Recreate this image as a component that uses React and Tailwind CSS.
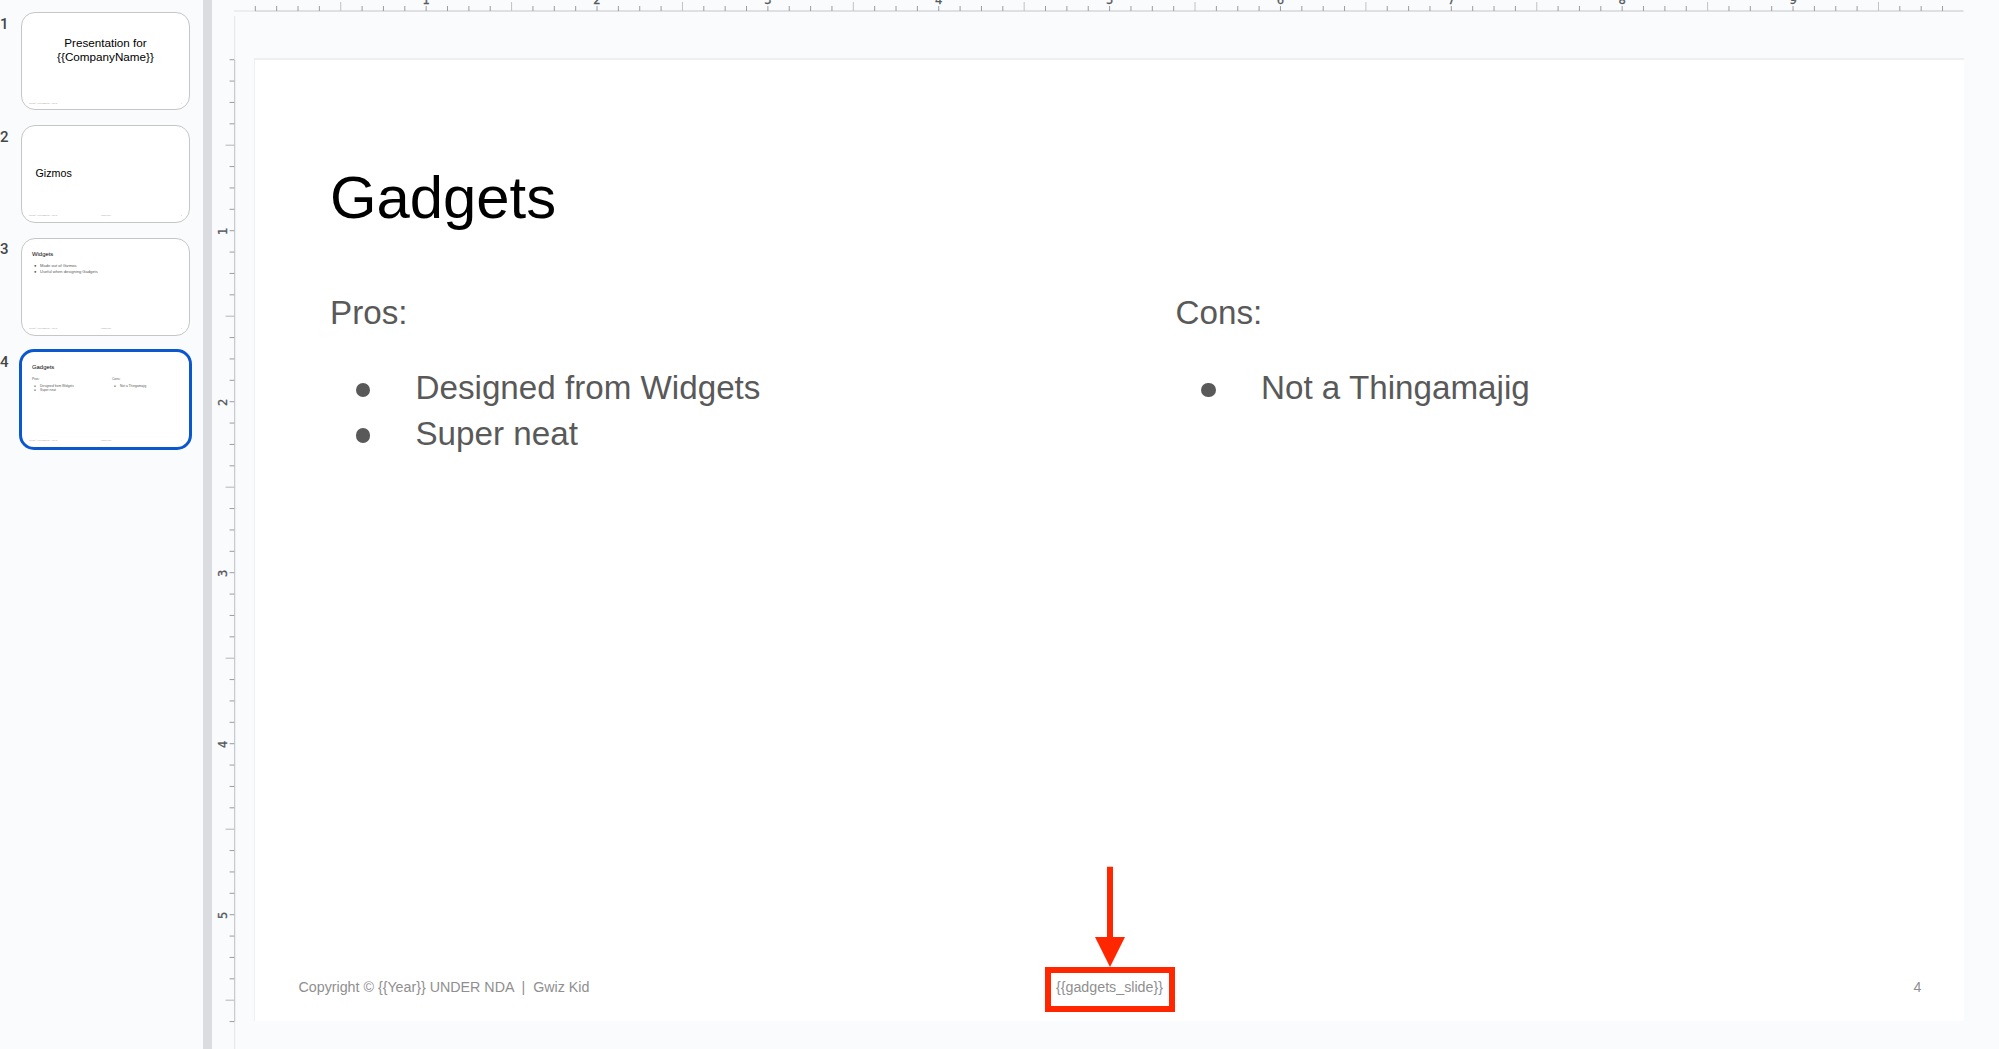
const INCH = 170.86;
const LEFT = 255.3;
const TOP = 60;

function TopRuler() {
  const ticks = Array.from({ length: 80 }, (_, i) => i);
  return (
    <svg className="block h-4 w-[1787px]" viewBox="212 0 1787 16">
      <path d="M234 11H255" stroke="#ebecee" strokeWidth="1.6" />
      <path d="M255 11H1963.5" stroke="#dfe0e2" strokeWidth="1.8" />
      {ticks.map((i) => {
        const x = LEFT + (i * INCH) / 8;
        const half = i % 8 === 4;
        return <path key={i} d={half ? `M${x} 2V11` : `M${x} 6V11`} stroke={half ? "#c0c2c5" : "#9a9c9f"} strokeWidth="1" />;
      })}
      {[1, 2, 3, 4, 5, 6, 7, 8, 9].map((n) => (
        <text key={n} x={LEFT + n * INCH} y="3.9" textAnchor="middle" fontSize="11.5" fontWeight="500" stroke="#55585c" strokeWidth="0.3" fill="#55585c" fontFamily="DejaVu Sans, sans-serif">
          {n}
        </text>
      ))}
    </svg>
  );
}

function SideRuler() {
  const ticks = Array.from({ length: 46 }, (_, i) => i);
  return (
    <svg className="block h-[1033px] w-[42px] shrink-0" viewBox="212 16 42 1033">
      <path d="M234.6 16V1049" stroke="#e6e8ea" strokeWidth="1.2" />
      <path d="M234.6 60V1021.5" stroke="#c9cbcf" strokeWidth="1.2" />
      {ticks.map((i) => {
        const y = TOP - 0.3 + (i * 171) / 8;
        const half = i % 8 === 4;
        return <path key={i} d={half ? `M225.6 ${y}H234.3` : `M229.6 ${y}H234.3`} stroke={half ? "#b4b6b9" : "#9a9c9f"} strokeWidth="1" />;
      })}
      {[1, 2, 3, 4, 5].map((n) => (
        <text key={n} transform={`translate(227.2 ${TOP + 0.3 + n * 171}) rotate(-90)`} textAnchor="middle" fontSize="11.5" fontWeight="500" stroke="#55585c" strokeWidth="0.3" fill="#55585c" fontFamily="DejaVu Sans, sans-serif">
          {n}
        </text>
      ))}
    </svg>
  );
}

function ThumbFooter({ slug, number }) {
  return (
    <div className="mt-auto mb-[4.8px] flex w-full text-[1.4px] leading-[2px] text-[#a0a0a0]">
      <span className="ml-[7px] w-[72px] whitespace-pre">Copyright © {"{{Year}}"} UNDER NDA  |  Gwiz Kid</span>
      <span className="w-[80px]">{slug}</span>
      <span>{number}</span>
    </div>
  );
}

function Thumb({ number, selected, slug, children }) {
  return (
    <div className="flex h-[112.8px] items-start">
      <span className="mt-[2.5px] w-[21px] font-[Roboto] text-[15px] leading-[18px] font-medium text-[#444746]">
        {number}
      </span>
      <div
        className={
          selected
            ? "-mt-[1.5px] -ml-[2px] flex h-[101px] w-[173px] flex-col rounded-[15px] border-[3px] border-[#0b57d0] bg-white"
            : "flex h-[98px] w-[169px] flex-col rounded-[14px] border border-[#c4c7c5] bg-white"
        }
      >
        {children}
        <ThumbFooter slug={slug} number={number} />
      </div>
    </div>
  );
}

function ThumbBullet({ children, className }) {
  return (
    <div className={className}>
      <span className="inline-block w-[6px]">●</span>
      {children}
    </div>
  );
}

function Filmstrip() {
  return (
    <aside className="w-[203px] shrink-0 bg-[#f9fbfd] pt-[12.3px]">
      <Thumb number={1} slug="">
        <div className="mt-[23px] text-center text-[11.7px] leading-[13.5px] text-black">
          Presentation for
          <br />
          {"{{CompanyName}}"}
        </div>
      </Thumb>
      <Thumb number={2} slug="{{gizmos_slide}}">
        <div className="mt-[41px] ml-[13.5px] text-[10.7px] leading-[13px] text-black">Gizmos</div>
      </Thumb>
      <Thumb number={3} slug="{{widgets_slide}}">
        <div className="mt-[12.6px] ml-[10px] text-[5.9px] leading-[7px] text-black">Widgets</div>
        <div className="mt-[4.6px] ml-[12px] text-[4.1px] leading-[5.9px] text-[#595959]">
          <ThumbBullet>Made out of Gizmos</ThumbBullet>
          <ThumbBullet>Useful when designing Gadgets</ThumbBullet>
        </div>
      </Thumb>
      <Thumb number={4} selected slug="{{gadgets_slide}}">
        <div className="mt-[12.3px] ml-[10px] text-[5.9px] leading-[7px] text-black">Gadgets</div>
        <div className="mt-[5.5px] ml-[10px] flex text-[3.25px] leading-[4.4px] text-[#595959]">
          <div className="w-[80px]">
            Pros:
            <ThumbBullet className="mt-[2.6px] ml-[2px]">Designed from Widgets</ThumbBullet>
            <ThumbBullet className="ml-[2px]">Super neat</ThumbBullet>
          </div>
          <div>
            Cons:
            <ThumbBullet className="mt-[2.6px] ml-[2px]">Not a Thingamajig</ThumbBullet>
          </div>
        </div>
      </Thumb>
    </aside>
  );
}

function Bullet({ children }) {
  return (
    <li className="flex h-[45.5px] items-center">
      <span className="mt-[3.5px] ml-[25.5px] size-[14.6px] rounded-full bg-[#595959]" />
      <span className="ml-[45.4px]">{children}</span>
    </li>
  );
}

function Column({ title, items, className }) {
  return (
    <div className={className}>
      <p className="leading-[45.5px]">{title}</p>
      <ul className="mt-[29.8px] leading-[45.5px]">
        {items.map((item) => (
          <Bullet key={item}>{item}</Bullet>
        ))}
      </ul>
    </div>
  );
}

function Callout() {
  return (
    <div className="absolute top-[806px] left-[790px] flex w-[130px] flex-col items-center">
      <svg className="block h-[101px] w-[30px]" viewBox="0 0 30 101">
        <path d="M12 .7h6V71h12L15 101 0 71h12z" fill="#ff2600" />
      </svg>
      <div className="-mt-[0.5px] h-[45px] w-[130px] border-[6px] border-[#ff2600]" />
    </div>
  );
}

function Slide() {
  return (
    <main className="relative mt-[42px] flex h-[963px] w-[1710px] flex-col border-t-2 border-l border-[#eeeff0] bg-white">
      <h1 className="mt-[102.5px] ml-[75px] text-[59.8px] leading-[70px] text-black">Gadgets</h1>
      <div className="mt-[57.5px] ml-[75px] flex text-[33.2px] text-[#595959]">
        <Column title="Pros:" items={["Designed from Widgets", "Super neat"]} className="w-[845.5px]" />
        <Column title="Cons:" items={["Not a Thingamajig"]} />
      </div>
      <footer className="mt-auto mb-[25px] flex pr-[42.5px] pl-[43.5px] text-[14.26px] leading-[18px] text-[#8f8f8f]">
        <span className="w-[757.5px] whitespace-pre">Copyright © {"{{Year}}"} UNDER NDA  |  Gwiz Kid</span>
        <span>{"{{gadgets_slide}}"}</span>
        <span className="ml-auto">4</span>
      </footer>
      <Callout />
    </main>
  );
}

export default function App() {
  return (
    <div className="flex h-[1049px] w-[1999px] overflow-hidden bg-[#f9fbfd] font-['Liberation_Sans',Arial,sans-serif]">
      <Filmstrip />
      <div className="w-[9px] shrink-0 bg-[#dadce0]" />
      <div className="flex flex-col">
        <TopRuler />
        <div className="flex">
          <SideRuler />
          <Slide />
        </div>
      </div>
    </div>
  );
}
